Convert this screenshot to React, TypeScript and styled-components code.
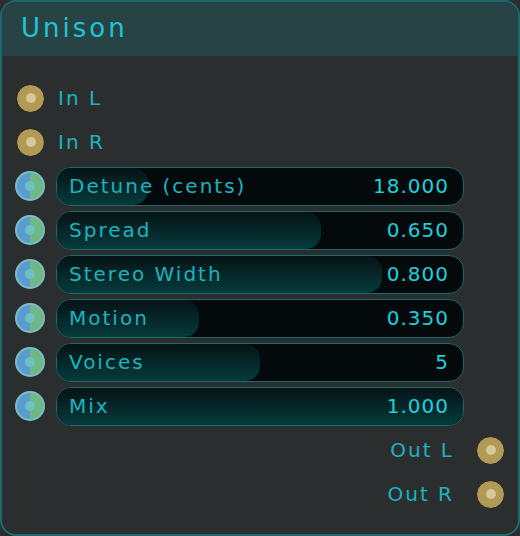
import React from 'react';
import styled, { createGlobalStyle } from 'styled-components';

const Global = createGlobalStyle`
	html, body {
		margin: 0;
		padding: 0;
		background: #2b2e2f;
	}
	* {
		box-sizing: border-box;
	}
`;

const Panel = styled.div`
	width: 520px;
	height: 536px;
	border: 2px solid #1d6a6c;
	border-radius: 16px;
	background: #2b2e2f;
	overflow: hidden;
	font-family: 'DejaVu Sans', 'Noto Sans', sans-serif;
`;

const Header = styled.header`
	height: 54px;
	background: #284345;
	display: flex;
	align-items: center;
	padding-left: 19px;
	padding-bottom: 2px;
`;

const Title = styled.h1`
	margin: 0;
	font-size: 26px;
	font-weight: 400;
	letter-spacing: 3px;
	color: #1ec6d2;
`;

const Body = styled.div`
	display: flex;
	flex-direction: column;
	padding: 20px 13px 0 14px;
`;

const Row = styled.div<{ $right?: boolean }>`
	height: 44px;
	display: flex;
	align-items: center;
	justify-content: ${(p) => (p.$right ? 'flex-end' : 'flex-start')};
	gap: ${(p) => (p.$right ? '22px' : '13px')};
`;

const AudioSocket = styled.div`
	width: 29px;
	height: 29px;
	flex: none;
	border-radius: 50%;
	background: #b09a55;
	border: 1.5px solid #1c1c18;
	display: flex;
	align-items: center;
	justify-content: center;
	&::after {
		content: '';
		width: 10px;
		height: 10px;
		border-radius: 50%;
		background: #d6c897;
	}
`;

const ParamSocket = styled.div`
	width: 30px;
	height: 30px;
	flex: none;
	margin-left: -1px;
	border-radius: 50%;
	background: linear-gradient(90deg, #5a9bd2 50%, #6db883 50%);
	border: 2px solid #7dbcc3;
	display: flex;
	align-items: center;
	justify-content: center;
	&::after {
		content: '';
		width: 10px;
		height: 10px;
		border-radius: 50%;
		background: #6dc0c3;
	}
`;

const PortLabel = styled.span`
	font-size: 20px;
	letter-spacing: 2px;
	color: #1eb3be;
`;

const Slider = styled.div`
	position: relative;
	margin-left: -2px;
	width: 408px;
	height: 39px;
	border: 1px solid #1b6a6e;
	border-radius: 15px;
	background: #040a0b;
	overflow: hidden;
	display: flex;
	align-items: center;
	justify-content: space-between;
	padding: 0 14px 0 12px;
`;

const Fill = styled.div`
	position: absolute;
	left: 0;
	top: 0;
	bottom: 0;
	border-radius: 0 15px 15px 0;
	background: linear-gradient(180deg, #061315 0%, #053b3c 100%);
`;

const SliderLabel = styled.span`
	position: relative;
	font-size: 20px;
	letter-spacing: 2px;
	color: #1eb3be;
`;

const SliderValue = styled.span`
	position: relative;
	font-size: 20px;
	letter-spacing: 1px;
	color: #1fd0dc;
`;

const params = [
	{ name: 'Detune (cents)', value: '18.000', fill: 0.223 },
	{ name: 'Spread', value: '0.650', fill: 0.65 },
	{ name: 'Stereo Width', value: '0.800', fill: 0.8 },
	{ name: 'Motion', value: '0.350', fill: 0.35 },
	{ name: 'Voices', value: '5', fill: 0.5 },
	{ name: 'Mix', value: '1.000', fill: 1 },
];

export default function App() {
	return (
		<Panel>
			<Global />
			<Header>
				<Title>Unison</Title>
			</Header>
			<Body>
				<Row>
					<AudioSocket />
					<PortLabel>In L</PortLabel>
				</Row>
				<Row>
					<AudioSocket />
					<PortLabel>In R</PortLabel>
				</Row>
				{params.map((p) => (
					<Row key={p.name}>
						<ParamSocket />
						<Slider>
							<Fill style={{ width: `${p.fill * 100}%` }} />
							<SliderLabel>{p.name}</SliderLabel>
							<SliderValue>{p.value}</SliderValue>
						</Slider>
					</Row>
				))}
				<Row $right>
					<PortLabel>Out L</PortLabel>
					<AudioSocket />
				</Row>
				<Row $right>
					<PortLabel>Out R</PortLabel>
					<AudioSocket />
				</Row>
			</Body>
		</Panel>
	);
}
